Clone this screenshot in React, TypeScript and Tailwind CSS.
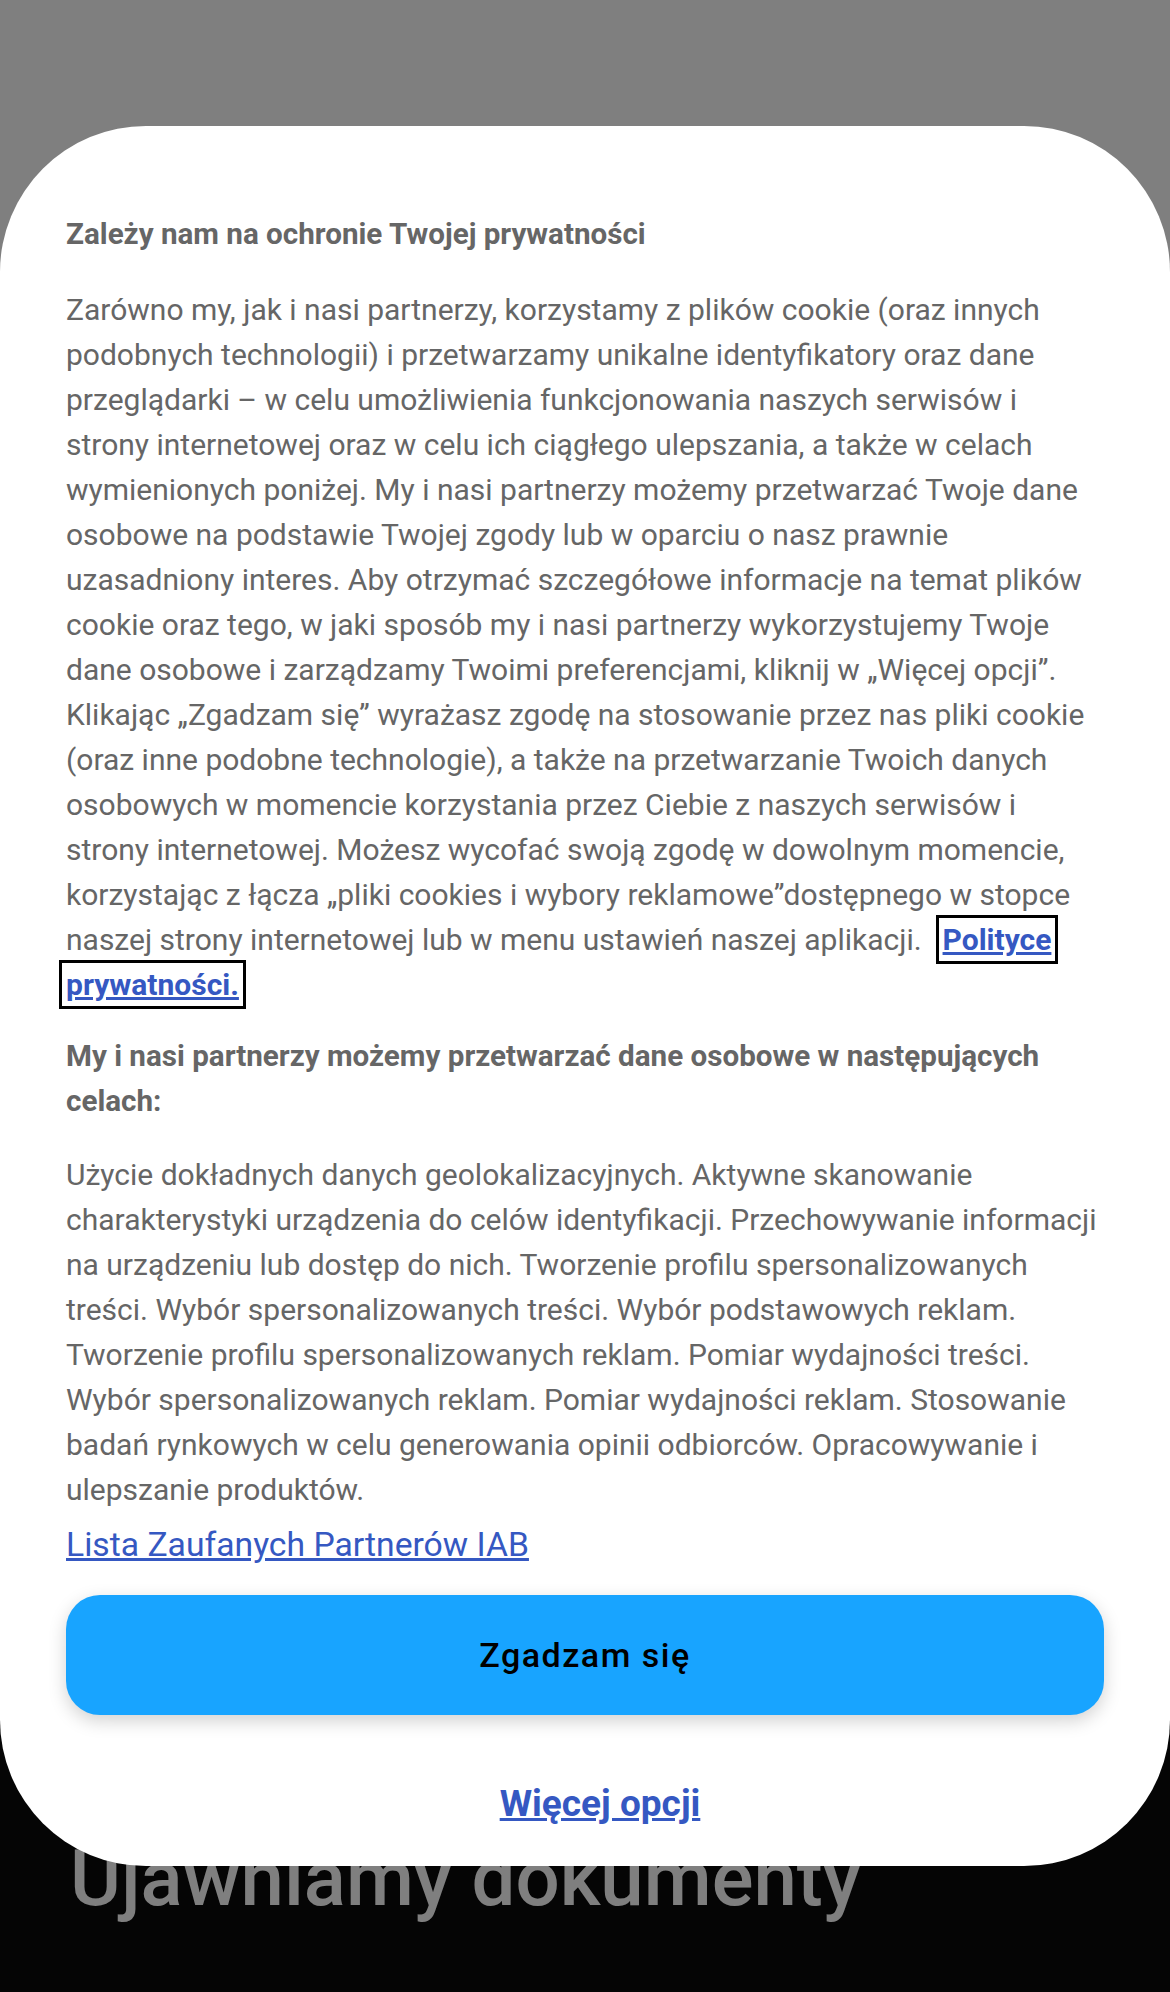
export default function App() {
  const purposes =
    'Użycie dokładnych danych geolokalizacyjnych. Aktywne skanowanie charakterystyki urządzenia do celów identyfikacji. Przechowywanie informacji na urządzeniu lub dostęp do nich. Tworzenie profilu spersonalizowanych treści. Wybór spersonalizowanych treści. Wybór podstawowych reklam. Tworzenie profilu spersonalizowanych reklam. Pomiar wydajności treści. Wybór spersonalizowanych reklam. Pomiar wydajności reklam. Stosowanie badań rynkowych w celu generowania opinii odbiorców. Opracowywanie i ulepszanie produktów.';

  return (
    <div className="relative h-[1992px] w-full overflow-hidden font-['Roboto',sans-serif]">
      {/* page behind the dialog */}
      <div className="flex h-full flex-col">
        <div className="h-[1600px] bg-white" />
        <div className="flex-1 bg-[#0a0a0a] px-[70px] pt-[234px]">
          <h1 className="text-[78px] font-medium leading-[90px] text-white">Ujawniamy dokumenty</h1>
        </div>
      </div>

      {/* dim overlay */}
      <div className="absolute inset-0 bg-black/50" />

      {/* consent dialog */}
      <div className="absolute inset-x-0 top-[126px] rounded-[146px] bg-white px-[66px] pt-[86px] pb-[40px] text-[30px] leading-[45px] text-[#666666]">
        <h2 className="text-[29.6px] font-bold">Zależy nam na ochronie Twojej prywatności</h2>

        <p className="mt-[30px]">
          Zarówno my, jak i nasi partnerzy, korzystamy z plików cookie (oraz innych podobnych technologii) i
          przetwarzamy unikalne identyfikatory oraz dane przeglądarki – w celu umożliwienia funkcjonowania naszych
          serwisów i strony internetowej oraz w celu ich ciągłego ulepszania, a także w celach wymienionych poniżej. My
          i nasi partnerzy możemy przetwarzać Twoje dane osobowe na podstawie Twojej zgody lub w oparciu o nasz prawnie
          uzasadniony interes. Aby otrzymać szczegółowe informacje na temat plików cookie oraz tego, w jaki sposób my i
          nasi partnerzy wykorzystujemy Twoje dane osobowe i zarządzamy Twoimi preferencjami, kliknij w „Więcej opcji”.
          Klikając „Zgadzam się” wyrażasz zgodę na stosowanie przez nas pliki cookie (oraz inne podobne technologie), a
          także na przetwarzanie Twoich danych osobowych w momencie korzystania przez Ciebie z naszych serwisów i strony
          internetowej. Możesz wycofać swoją zgodę w dowolnym momencie, korzystając z łącza „pliki cookies i wybory
          reklamowe”dostępnego w stopce naszej strony internetowej lub w menu ustawień naszej aplikacji.{'\u00a0 '}
          <a
            href="#"
            className="ml-[6px] font-bold text-[#3558c2] underline outline-[3px] outline-offset-[4px] outline-black outline-solid"
          >
            Polityce prywatności.
          </a>
        </p>

        <h3 className="mt-[27px] text-[29.6px] font-bold">
          My i nasi partnerzy możemy przetwarzać dane osobowe w następujących celach:
        </h3>

        <p className="mt-[28px]">{purposes}</p>

        <a href="#" className="mt-[10px] block w-fit text-[33.7px] text-[#3558c2] underline">
          Lista Zaufanych Partnerów IAB
        </a>

        <button className="mt-[28px] flex h-[120px] w-full items-center justify-center rounded-[34px] bg-[#18a4ff] text-[34px] font-medium tracking-[1.5px] text-black shadow-[0_6px_18px_rgba(0,0,0,0.18)]">
          Zgadzam się
        </button>

        <div className="mt-[66px] flex justify-center pl-[30px]">
          <a href="#" className="text-[37px] font-bold leading-[45px] text-[#3558c2] underline">
            Więcej opcji
          </a>
        </div>
      </div>
    </div>
  );
}
